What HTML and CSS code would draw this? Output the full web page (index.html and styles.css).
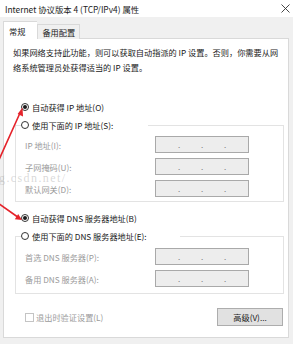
FILE: index.html
```html
<!DOCTYPE html>
<html lang="zh-CN">
<head>
<meta charset="utf-8">
<link rel="stylesheet" href="styles.css">
</head>
<body>
<div class="dialog">
  <div class="titlebar">
    <span class="title">Internet 协议版本 4 (TCP/IPv4) 属性</span>
    <svg class="close" width="9" height="9" viewBox="0 0 9 9"><path d="M0.5 0.5L8.5 8.5M8.5 0.5L0.5 8.5" stroke="#333" stroke-width="0.9" fill="none"/></svg>
  </div>
  <div class="tabs">
    <div class="tab active">常规</div>
    <div class="tab">备用配置</div>
  </div>
  <div class="panel">
    <p class="intro">如果网络支持此功能，则可以获取自动指派的 IP 设置。否则，你需要从网<br>络系统管理员处获得适当的 IP 设置。</p>

    <div class="radio-row first"><span class="radio checked"></span><span>自动获得 IP 地址(O)</span></div>

    <fieldset class="group ip">
      <legend class="legend ip-legend"><span class="radio"></span><span>使用下面的 IP 地址(S):</span></legend>
      <div class="field"><span class="label">IP 地址(I):</span><span class="ipbox"><i>.</i><i>.</i><i>.</i></span></div>
      <div class="field"><span class="label">子网掩码(U):</span><span class="ipbox"><i>.</i><i>.</i><i>.</i></span></div>
      <div class="field"><span class="label">默认网关(D):</span><span class="ipbox"><i>.</i><i>.</i><i>.</i></span></div>
    </fieldset>

    <div class="radio-row dns-auto"><span class="radio checked"></span><span>自动获得 DNS 服务器地址(B)</span></div>

    <fieldset class="group dns">
      <legend class="legend dns-legend"><span class="radio"></span><span>使用下面的 DNS 服务器地址(E):</span></legend>
      <div class="field"><span class="label">首选 DNS 服务器(P):</span><span class="ipbox"><i>.</i><i>.</i><i>.</i></span></div>
      <div class="field"><span class="label">备用 DNS 服务器(A):</span><span class="ipbox"><i>.</i><i>.</i><i>.</i></span></div>
    </fieldset>

    <div class="footer">
      <div class="check-row"><span class="checkbox"></span><span>退出时验证设置(L)</span></div>
      <div class="button">高级(V)...</div>
    </div>
  </div>
</div>
<div class="watermark">g.csdn.net/</div>
<svg class="arrows" width="293" height="344" viewBox="0 0 293 344">
  <g stroke="#e5232b" stroke-width="1.6" fill="none" stroke-linecap="round">
    <path d="M-2 162L20 113"/>
    <path d="M-2 203L17 216.5"/>
  </g>
  <g fill="#e5232b">
    <path d="M22.5 107.5L23 116.5L17.6 114.1Z"/>
    <path d="M22 220L14.8 219.2L18.2 214.1Z"/>
  </g>
</svg>
</body>
</html>
```
FILE: styles.css
```css
* { box-sizing: border-box; }
html, body {
  margin: 0;
  padding: 0;
}
body {
  width: 293px;
  height: 344px;
  background: #f0f0f0;
  font-family: "Noto Sans CJK SC", "Noto Sans", sans-serif;
  font-size: 8.2px;
  color: #1a1a1a;
  position: relative;
  overflow: hidden;
}
.dialog {
  display: flex;
  flex-direction: column;
}
.titlebar {
  height: 17px;
  background: #ffffff;
  display: flex;
  align-items: center;
  justify-content: space-between;
  padding: 0 3px 0 5px;
}
.title {
  font-size: 8.4px;
  color: #222;
}
.close { display: block; }
.tabs {
  display: flex;
  align-items: flex-end;
  margin: 4px 0 -1px 3px;
  position: relative;
  z-index: 1;
}
.tab {
  height: 15px;
  padding: 0 4px;
  border: 1px solid #d9d9d9;
  border-bottom: none;
  background: #f0f0f0;
  display: flex;
  align-items: center;
  color: #222;
}
.tab.active {
  height: 18px;
  background: #ffffff;
  padding: 0 12px 0 5px;
  border-right: none;
}
.panel {
  margin: 0 4px 0 3px;
  height: 300px;
  background: #ffffff;
  border: 1px solid #d9d9d9;
  display: flex;
  flex-direction: column;
}
.intro {
  margin: 6px 0 0 9px;
  line-height: 15px;
  color: #1a1a1a;
}
.radio-row, .legend, .check-row {
  display: flex;
  align-items: center;
  gap: 3px;
  height: 14px;
}
.radio-row.first { margin: 25px 0 0 17px; }
.radio {
  width: 8px;
  height: 8px;
  border: 1px solid #333;
  border-radius: 50%;
  background: #fff;
  display: flex;
  align-items: center;
  justify-content: center;
  flex: none;
}
.radio.checked::after {
  content: "";
  width: 4px;
  height: 4px;
  border-radius: 50%;
  background: #1a1a1a;
}
.group {
  margin: 4px 4px 0 11px;
  padding: 4px 0 4px 5px;
  border: 1px solid #e3e3e3;
  min-width: 0;
}
.group.dns { padding: 5px 0 6px 5px; }
.legend {
  padding: 0;
  margin: 0;
}
.ip-legend { width: 127px; }
.dns-legend { width: 159px; }
.field {
  display: flex;
  align-items: center;
  height: 17px;
  padding-left: 4px;
}
.field + .field { margin-top: 5px; }
.label {
  width: 130px;
  color: #9b9b9b;
}
.ipbox {
  width: 94px;
  height: 17px;
  border: 1px solid #a9a9a9;
  background: #ededed;
  display: flex;
  justify-content: space-evenly;
  align-items: center;
}
.ipbox i {
  font-style: normal;
  color: #7a7a7a;
  font-size: 8px;
  line-height: 1;
  width: 0;
  display: flex;
  justify-content: center;
}
.dns-auto { margin: 9px 0 0 17px; }
.footer {
  margin: 14px 5px 0 21px;
  display: flex;
  align-items: center;
  justify-content: space-between;
}
.check-row { color: #9b9b9b; gap: 2px; }
.checkbox {
  width: 9px;
  height: 9px;
  border: 1px solid #c4c4c4;
  background: #fff;
}
.button {
  width: 66px;
  height: 18px;
  border: 1px solid #adadad;
  background: #e1e1e1;
  display: flex;
  align-items: center;
  justify-content: center;
  color: #1a1a1a;
}
.watermark {
  position: absolute;
  left: -1px;
  top: 171px;
  font-family: "Liberation Serif", serif;
  font-size: 12px;
  line-height: 14px;
  letter-spacing: 1.4px;
  word-spacing: 2px;
  color: rgba(170, 170, 170, 0.45);
  pointer-events: none;
}
.arrows {
  position: absolute;
  left: 0;
  top: 0;
  pointer-events: none;
}
```
